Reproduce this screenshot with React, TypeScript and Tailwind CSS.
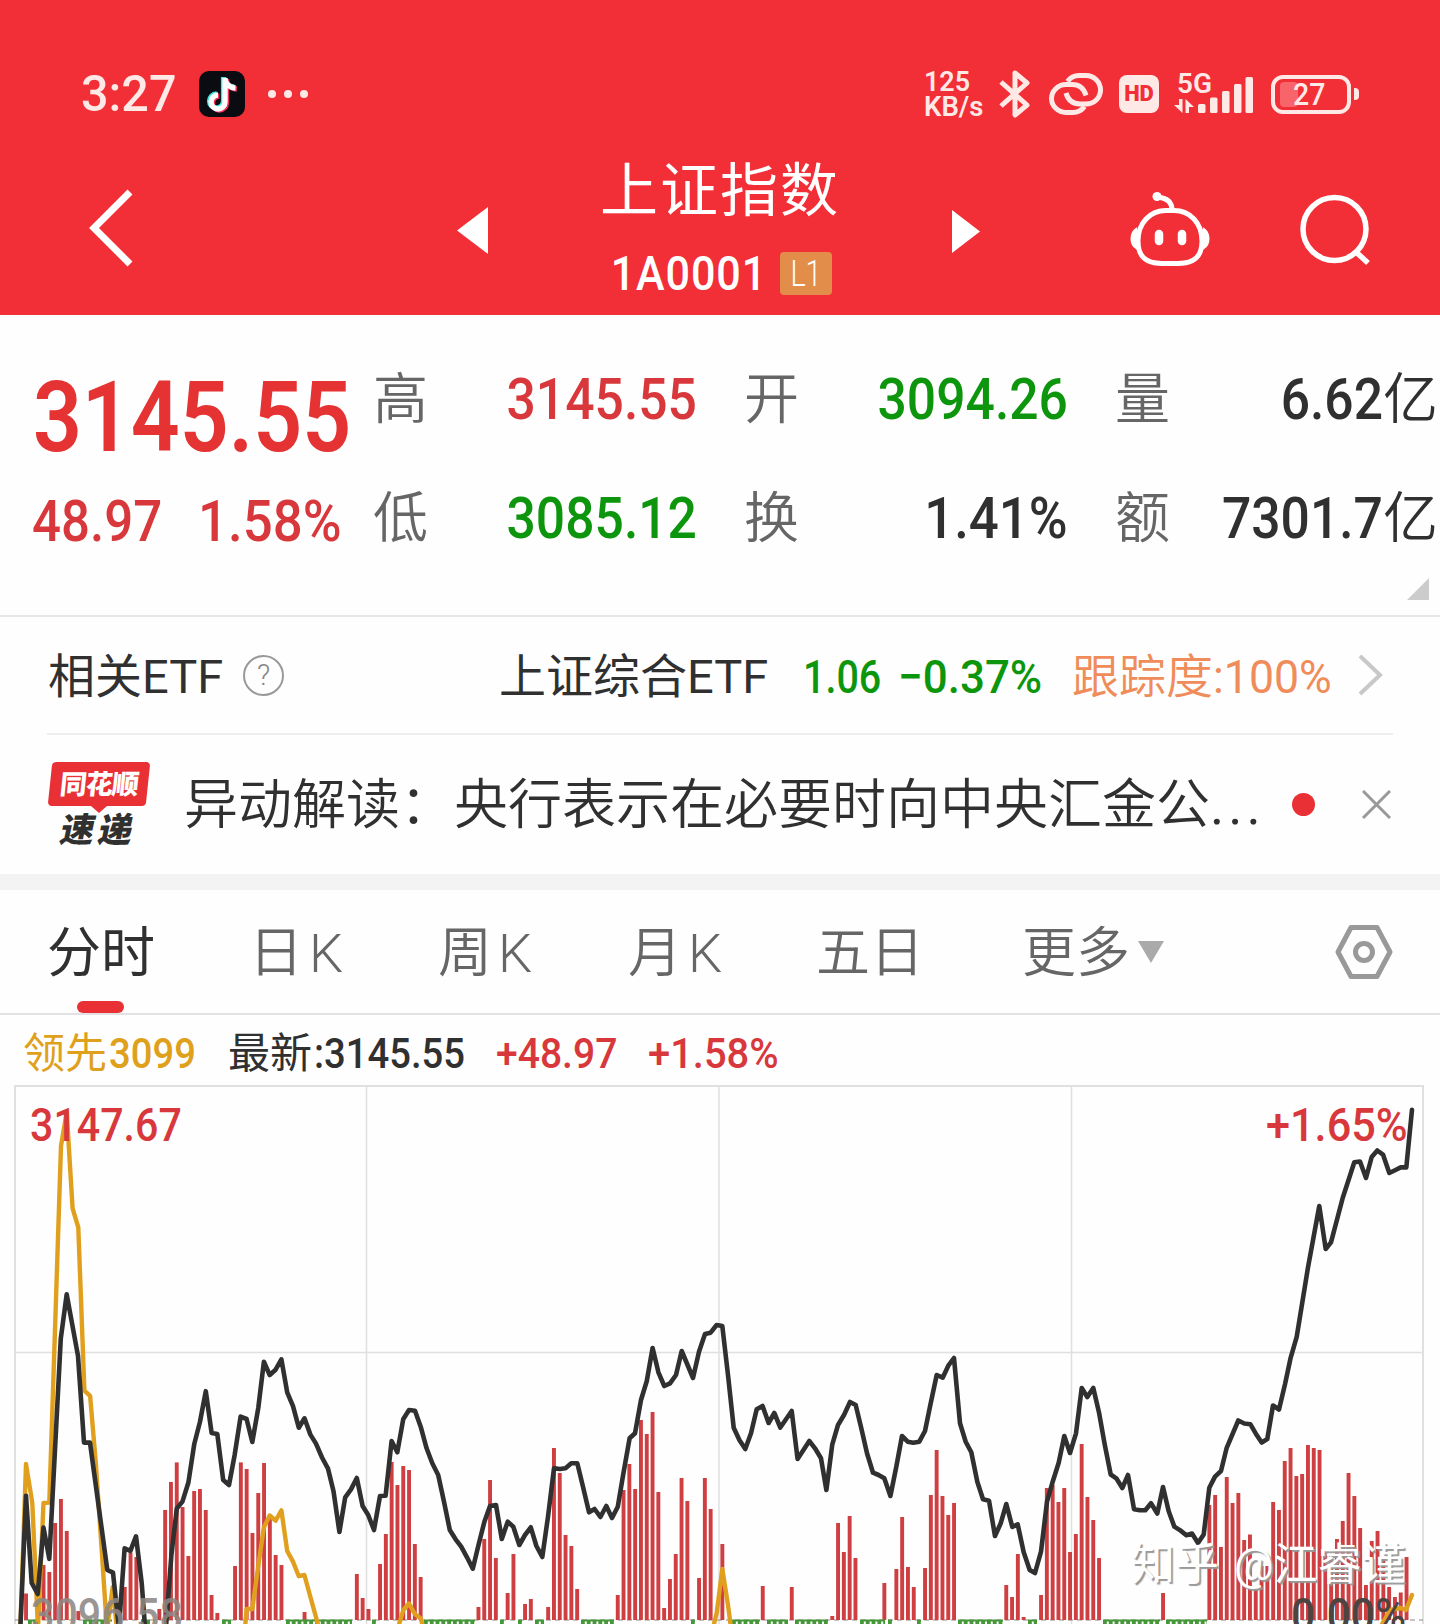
import clsx from "clsx";

type FigProps = {
  children: React.ReactNode;
  className?: string;
  align?: "left" | "right";
};

function Fig({ children, className, align = "left" }: FigProps) {
  return (
    <span
      className={clsx(
        "inline-block whitespace-pre font-medium",
        align === "left" ? "origin-left" : "origin-right",
        className,
      )}
    >
      {children}
    </span>
  );
}

function StatusBar() {
  return (
    <div className="flex h-[46px] items-center text-[#ffe9e7]">
      <Fig className="w-[100px] scale-x-[.97] pl-px text-[50px]">3:27</Fig>
      <svg className="ml-[19px] size-[46px]" viewBox="0 0 46 46">
        <rect width="46" height="46" rx="10" fill="#0b0b12" />
        <g fill="none" strokeWidth="5.4">
          <path d="M24.6 6v24a7 7 0 1 1-7-7M24.6 7c.6 5 4.4 8.600 10.500 9" stroke="#3fe6e0" />
          <path d="M27.400 8v24a7 7 0 1 1-7-7M27.400 9c.6 5 4.400 8.600 10.500 9" stroke="#f5315c" />
          <path d="M26 7v24a7 7 0 1 1-7-7M26 8c.6 5 4.400 8.600 10.500 9" stroke="#fff" />
        </g>
      </svg>
      <div className="ml-[23px] flex gap-2">
        <i className="size-2 rounded-full bg-[#ffe9e7]" />
        <i className="size-2 rounded-full bg-[#ffe9e7]" />
        <i className="size-2 rounded-full bg-[#ffe9e7]" />
      </div>

      <div className="ml-[616px] flex w-[64px] flex-col text-[28px] leading-[25px]">
        <Fig className="h-[25px] scale-x-[.96] font-semibold!">125</Fig>
        <Fig className="h-[25px] scale-x-[.98] font-semibold!">KB/s</Fig>
      </div>
      <svg className="ml-[11px] h-[50px] w-8" viewBox="0 0 32 50" fill="none" stroke="currentColor" strokeWidth="5" strokeLinejoin="round">
        <path d="M2 13l26 23-12 10V4l12 10L2 37" />
      </svg>
      <svg className="ml-[18px] h-[42px] w-[54px]" viewBox="0 0 54 42" fill="none" stroke="currentColor" strokeWidth="5">
        <path d="M18.500 8.500C21 5 25 2.500 30 2.500h7c8 0 14.500 6.500 14.500 14.500S45 31 37 31h-6c-7 0-12-4-14-11" />
        <path d="M35.500 33.500C33 37 29 39.500 24 39.500h-7C9 39.500 2.500 33 2.500 25.500S9 11.500 17 11.500h6c7 0 12 4 14 11" />
      </svg>
      <div className="ml-[16px] flex h-[38px] w-10 items-center justify-center rounded-lg bg-[#ffe9e7]">
        <span className="text-[22px] font-black text-[#f22e36]">HD</span>
      </div>
      <svg className="ml-[14px] h-[42px] w-[81px] overflow-visible" viewBox="0 0 81 42" fill="currentColor">
        <text x="4" y="19.500" fontSize="28" fontWeight="600" textLength="35" lengthAdjust="spacingAndGlyphs">5G</text>
        <path d="M6 26h3.500v14L1 32h5zM12.500 40V26l8.500 8h-5v6z" />
        <rect x="25" y="31" width="7.500" height="9" rx="1.500" />
        <rect x="37" y="24.500" width="7.500" height="15.500" rx="1.500" />
        <rect x="49" y="18" width="7.500" height="22" rx="1.500" />
        <rect x="61" y="11" width="7.500" height="29" rx="1.500" />
        <rect x="72.500" y="4" width="7.500" height="36" rx="1.500" />
      </svg>
      <div className="relative ml-[17px] flex h-[39px] w-20 items-center justify-center rounded-xl border-4 border-[#ffe9e7]">
        <div className="absolute left-[5px] top-[3px] h-[25px] w-[18px] rounded-sm bg-[#f7646a]" />
        <Fig className="relative scale-x-[.92] text-[31px]">27</Fig>
      </div>
      <i className="ml-[3px] h-3 w-[5px] rounded-r bg-[#ffe9e7]" />
    </div>
  );
}

function TitleBar() {
  return (
    <div className="flex h-[150px] items-start text-white">
      <svg className="ml-[8px] mt-[30px] h-[80px] w-[46px]" viewBox="0 0 46 80" fill="none" stroke="currentColor" strokeWidth="7">
        <path d="M42 4L6 40l36 36" />
      </svg>
      <svg className="ml-[323px] mt-[49px] h-[47px] w-[31px]" viewBox="0 0 31 47" fill="currentColor">
        <path d="M31 0v47L0 23.500z" />
      </svg>
      <div className="ml-[98px] flex w-[266px] flex-col items-center">
        <h1 className="pl-[2px] text-[58px] leading-[66px] tracking-[2px]">上证指数</h1>
        <div className="mt-[27px] flex h-[44px] w-full items-center">
          <Fig className="w-[167px] scale-x-[.88] pl-[28px] text-[49px] tracking-[1px]">1A0001</Fig>
          <span className="ml-[27px] flex h-[43px] w-[52px] items-center justify-center rounded bg-[#e28d49] text-[37px]">
            <Fig className="origin-center! scale-x-[.78] font-[350]!">L1</Fig>
          </span>
        </div>
      </div>
      <svg className="ml-[100px] mt-[52px] h-[43px] w-[28px]" viewBox="0 0 28 43" fill="currentColor">
        <path d="M0 0v43l28-21.500z" />
      </svg>
      <svg className="ml-[148px] mt-[33px] h-[76px] w-[84px]" viewBox="0 0 84 76" fill="none" stroke="currentColor" strokeWidth="5">
        <path d="M42 19.500h4C62 19.500 74 32 74 50c0 15-7 22.500-24 22.500H34C17 72.500 10 65 10 50c0-18 12-30.500 28-30.500z" />
        <path d="M44 19C44 11 39 7 30 6" />
        <circle cx="29" cy="5.500" r="4.500" fill="currentColor" stroke="none" />
        <path d="M8 38c-6 4-6 15 0 19zM76 38c6 4 6 15 0 19z" fill="currentColor" strokeWidth="2" />
        <path d="M31 43v7M54 43v7" strokeWidth="8.500" strokeLinecap="round" />
      </svg>
      <svg className="ml-[87px] mt-[36px] size-[72px]" viewBox="0 0 72 72" fill="none" stroke="currentColor" strokeWidth="5.500">
        <circle cx="35.500" cy="35" r="31.500" />
        <path d="M57 58l12 11" />
      </svg>
    </div>
  );
}

const stats = [
  { label: "高", value: "3145.55", color: "text-[#d8383b]" },
  { label: "开", value: "3094.26", color: "text-[#0d960d]" },
  { label: "量", value: "6.62", unit: "亿", color: "text-[#303030]" },
  { label: "低", value: "3085.12", color: "text-[#0d960d]" },
  { label: "换", value: "1.41%", color: "text-[#303030]" },
  { label: "额", value: "7301.7", unit: "亿", color: "text-[#303030]" },
];

function Quote() {
  return (
    <section className="relative flex h-[302px] border-b-2 border-[#e6e6e6] pt-6">
      <div className="w-[373px] pl-8 text-[#d8383b]">
        <Fig className="mt-[29px] block! scale-x-[.875] pl-px text-[98px] leading-[100px] font-semibold! text-[#e53232]">3145.55</Fig>
        <div className="mt-[23px] flex h-[60px] items-center text-[58px]">
          <Fig className="w-[166px] scale-x-[.88]">48.97</Fig>
          <Fig className="scale-x-[.91]">1.58%</Fig>
        </div>
      </div>
      <div className="grid h-[238px] grid-cols-[324px_324px_323px] grid-rows-2 gap-x-[47px]">
        {stats.map((s) => (
          <div key={s.label} className="flex items-center justify-between">
            <span className="pt-[2px] text-[55px] font-[350] text-[#666]">{s.label}</span>
            <span className={clsx("flex items-center text-[58px]", s.color)}>
              <Fig align="right" className={s.value.endsWith("%") ? "scale-x-[.91]" : "scale-x-[.89]"}>
                {s.value}
              </Fig>
              {s.unit && <span className="pt-[2px] text-[55px] font-[350]">{s.unit}</span>}
            </span>
          </div>
        ))}
      </div>
      <svg className="absolute bottom-[15px] right-[11px] size-[22px]" viewBox="0 0 22 22">
        <path d="M22 0v22H0z" fill="#ccc" />
      </svg>
    </section>
  );
}

function EtfRow() {
  return (
    <section className="mx-[47px] flex h-[118px] items-center border-b-2 border-[#eee] text-[47px] text-[#303030]">
      <span className="w-[196px] pt-[2px] pl-px">相关ETF</span>
      <span className="flex size-[41px] items-center justify-center rounded-full border-2 border-[#999] text-[29px] font-light text-[#888]">?</span>
      <span className="ml-[215px] w-[304px] whitespace-nowrap pt-[2px]">上证综合ETF</span>
      <Fig className="w-[95px] scale-x-[.84] pt-[3px]">
        <span className="text-[#0d960d]">1.06</span>
      </Fig>
      <Fig className="w-[174px] scale-x-[.935] pt-[3px] text-[#0d960d]">−0.37%</Fig>
      <span className="flex w-[286px] items-center whitespace-nowrap pt-[2px] text-[#ef8c59]">
        <span className="font-[350]">跟踪度</span>
        <Fig className="scale-x-[.95] font-normal!">:100%</Fig>
      </span>
      <svg className="h-[42px] w-[26px]" viewBox="0 0 26 42" fill="none" stroke="#c8c8c8" strokeWidth="4">
        <path d="M2 2l20 19L2 40" />
      </svg>
    </section>
  );
}

function NewsRow() {
  return (
    <section className="flex h-[139px] items-center pl-[47px] text-[#303030]">
      <div className="flex w-[104px] flex-col items-center">
        <div className="flex h-[44px] w-[98px] -skew-x-6 items-center justify-center rounded-[4px] bg-[#e83035] pt-[2px] text-[27px] font-black tracking-[-1px] text-white">
          同花顺
        </div>
        <svg className="h-[7px] w-4" viewBox="0 0 16 7">
          <path d="M0 0h16L8 7z" fill="#e83035" />
        </svg>
        <div className="-skew-x-12 text-[34px] font-black leading-[34px] tracking-[4px]">速递</div>
      </div>
      <p className="ml-[33px] w-[1080px] whitespace-nowrap pt-[2px] text-[54px] font-[350]">
        异动解读：央行表示在必要时向中央汇金公<span className="font-normal tracking-[4px]">...</span>
      </p>
      <i className="ml-[28px] size-[23px] rounded-full bg-[#e83035]" />
      <svg className="ml-[47px] size-[29px]" viewBox="0 0 29 29" stroke="#999" strokeWidth="3">
        <path d="M1 1l27 27M28 1L1 28" />
      </svg>
    </section>
  );
}

function Tabs() {
  return (
    <nav className="flex h-[125px] items-center border-b-2 border-[#e2e2e2] pl-[47px] pt-px text-[54px] font-[350] text-[#666]">
      <div className="relative flex h-full w-[202px] items-center pt-[3px] font-normal text-[#303030]">
        分时
        <i className="absolute bottom-0 left-[30px] h-[12px] w-[47px] rounded-full bg-[#e83035]" />
      </div>
      <span className="w-[189px] pt-[3px]">日<span className="ml-[6px]">K</span></span>
      <span className="w-[190px] pt-[3px]">周<span className="ml-[6px]">K</span></span>
      <span className="w-[188px] pt-[3px]">月<span className="ml-[6px]">K</span></span>
      <span className="w-[206px] pt-[3px]">五日</span>
      <span className="pt-[3px]">更多</span>
      <svg className="ml-[8px] h-[22px] w-[26px]" viewBox="0 0 26 22">
        <path d="M0 0h26L13 22z" fill="#aaa" />
      </svg>
      <svg className="ml-[171px] h-[56px] w-[58px]" viewBox="0 0 58 56" fill="none" stroke="#999" strokeWidth="5" strokeLinejoin="round">
        <path d="M16 3.500h26L55 28 42 52.500H16L3 28z" />
        <circle cx="29" cy="28" r="8.500" />
      </svg>
    </nav>
  );
}

function Legend() {
  return (
    <div className="flex h-[70px] items-center pl-[23px] pt-[7px] text-[42px]">
      <span className="flex w-[205px] items-center text-[#dfa01c]">
        <span className="w-[86px]">领先</span>
        <Fig className="scale-x-[.91]">3099</Fig>
      </span>
      <span className="flex w-[268px] items-center text-[#303030]">
        <span className="w-[86px]">最新</span>
        <Fig className="scale-x-[.91]">:3145.55</Fig>
      </span>
      <Fig className="w-[152px] scale-x-[.93] text-[#d8383b]">+48.97</Fig>
      <Fig className="scale-x-[.95] text-[#d8383b]">+1.58%</Fig>
    </div>
  );
}

const BASE = 1620;
const STEP = 5.8;

// price line
const price =
  "19,1650 20.700,1620 26,1495.700 31.700,1583 37.700,1594 43.500,1527.600 49.300,1558.800 60.800,1338.500 66.700,1294.400 78,1355.800 84,1442.600 90,1442.600 107.300,1570 113,1572.700 118.900,1628 124.600,1548.400 130.400,1550.900 136,1536.300 141.700,1583 146,1640 165,1640 171.400,1555 176.800,1508.500 182.400,1501.600 188.400,1482.500 194.200,1444.300 200,1421.800 205.800,1391.200 211.600,1432.900 217.300,1434 223.200,1480 229,1485 234.700,1454.700 240.600,1416.600 246.600,1419 252.300,1442 258.300,1407.900 263.900,1361.800 269.700,1375 275.600,1369.700 281.400,1359.300 287.200,1392.300 293,1406.200 298.800,1427.700 304.500,1418.300 310.400,1434.600 316,1443.600 322,1457.500 328,1468.600 333.500,1491.200 339.400,1532 345.200,1497.400 351,1489.400 356.800,1478 362.600,1506 368.200,1515 374,1530 380,1496 385.600,1495.700 391.600,1441 397.300,1452.300 403.200,1419.300 409,1410 415,1410.700 420.700,1426.700 426.600,1448.300 432.300,1463.300 438.200,1475 444,1501.700 449.800,1530 455.600,1539.300 461.200,1546.700 467,1557.300 472.800,1568.700 478.500,1545 484.400,1521.700 490,1506 496,1505 501.800,1539 507.700,1521.700 513.300,1526.700 519.300,1545 525,1535 530.800,1527.300 536.400,1546 542.300,1557 548,1516.700 554,1468.300 560,1469 565.500,1468.300 571.300,1463.300 577.300,1463.300 583,1486.700 589,1512.300 594.600,1509 600.400,1517 606.300,1506 612,1518 617.800,1506.700 623.400,1473.300 629.600,1438.300 635,1433.300 641,1400 646.800,1381 652.600,1348 658.400,1372.300 664.300,1386 670,1383.300 676,1375 681.700,1351 693,1378 699,1351.700 705,1334 710.600,1332.700 716.600,1325 722.300,1326 728,1375 733.700,1427.700 739.400,1440 745.300,1449 751,1433.300 756.700,1409.300 762.600,1406 768.600,1423 774.300,1413 780.300,1427.500 791.700,1411 797.600,1459 809.300,1441 815,1448.300 821,1458.300 826.400,1490 832.300,1444.300 838,1425 844,1415 850,1402 855.700,1405 861.300,1428.300 867,1453.300 873,1472.700 878.600,1475 884.300,1478.300 890.400,1496 896.300,1466.700 902,1436 907.700,1441.700 913.300,1442.700 919.300,1441.700 925,1431 930.700,1403.300 936.700,1375 942.700,1377.700 948.300,1365.700 954,1358 960,1423.300 965.700,1441.700 971.300,1452.300 977.300,1481.700 983,1499.300 989,1500.700 995,1536 1000.700,1523.300 1006.300,1504 1012.300,1527 1017.700,1524.300 1023.700,1552.300 1029.700,1570 1035,1573 1041,1551.700 1047,1501.700 1052.700,1481.700 1058.700,1462.700 1064.300,1436 1070,1453 1076,1433.300 1081.700,1388 1087.300,1397 1093.300,1388 1099,1412.400 1104.700,1444.300 1110.700,1474.500 1116.300,1478.300 1122.300,1488 1128,1475 1134,1509.200 1140,1510.300 1145.300,1510.300 1151,1503.300 1157.300,1513.500 1163,1487 1168.700,1511.300 1174.300,1526.600 1180.300,1530.400 1186.300,1535.200 1192,1533.500 1198,1543 1203.700,1534.500 1209.300,1487.700 1215,1476.600 1221,1471 1226.700,1447.800 1238.300,1420.500 1244.300,1423.500 1250.300,1424.200 1256,1433.900 1261.700,1442.500 1267.300,1439 1273,1405.500 1279,1409.500 1285,1384.300 1290.700,1357.600 1296.700,1336.800 1308,1267.400 1319.300,1206 1325.700,1249 1331,1242.400 1342.700,1198 1354.300,1162.200 1360,1161.500 1366,1178 1371.700,1157 1377.300,1150.500 1383,1154.600 1389.300,1173 1395,1170.200 1400.700,1167.400 1406.300,1167.400 1412,1109.800";

// leading indicator, only the parts above the baseline
const lead = [
  "20,1640 26,1464 32.300,1503 38,1628 43.500,1503 49.300,1502.600 55,1329.800 61,1146 66.700,1112 72.600,1208.400 78.300,1227.500 84.400,1390.600 90.100,1395.800 95.700,1461.700 101.600,1548.400 107,1630 112.700,1587 118,1640",
  "245,1628 246.700,1609 252.300,1609 258.300,1565.800 263.800,1527.600 269.700,1515.500 275.600,1520.700 281.400,1510.300 287.200,1551 293,1561.600 298.800,1576.200 304.400,1575 310.400,1597 319,1628",
  "398,1628 403.300,1610 409,1603.500 415,1614.300 420.700,1618.300 424,1630",
  "713,1628 716.700,1613 722.300,1569 728,1605 731,1628",
  "1380,1628 1390,1610 1400.700,1608 1406,1610 1412,1595",
];

// runs of adjacent volume bars: first bar's x, then the top of each
const volume: [number, number[]][] = [
  [26, [1593.5]],
  [43.5, [1565, 1572, 1523, 1499, 1531]],
  [78.3, [1611]],
  [124.7, [1587, 1552.6, 1557]],
  [159.3, [1609, 1510, 1482, 1462.4, 1507, 1556, 1491, 1489, 1510, 1595, 1613]],
  [235, [1566, 1462.4, 1469, 1533, 1493, 1463, 1517, 1555, 1565]],
  [304.5, [1612]],
  [356.8, [1574, 1598, 1609]],
  [380, [1564, 1534, 1462, 1485, 1466, 1470, 1544, 1577]],
  [478.4, [1607, 1539, 1480, 1558]],
  [507.6, [1593, 1554]],
  [525, [1604, 1599]],
  [548.1, [1607, 1448, 1473, 1535, 1546, 1589]],
  [617.7, [1595, 1490, 1464, 1489, 1420, 1434, 1412, 1492, 1608, 1579, 1554, 1478, 1501]],
  [699, [1578, 1478, 1509]],
  [722.3, [1544]],
  [762.7, [1586]],
  [791.7, [1587]],
  [832.2, [1616, 1523, 1552, 1516, 1558]],
  [884.3, [1583]],
  [896.3, [1569, 1517, 1567, 1587]],
  [925, [1568, 1495, 1450, 1496, 1515, 1503]],
  [1006.2, [1585, 1597, 1554, 1617]],
  [1041, [1595, 1488, 1485, 1502, 1488, 1552, 1534, 1444, 1497, 1520, 1558]],
  [1163, [1593]],
  [1209.3, [1505, 1495, 1547, 1477, 1503, 1493, 1540, 1534.5, 1588, 1566, 1566, 1502, 1510, 1461, 1448, 1476, 1474, 1445, 1448, 1450, 1551, 1560, 1539, 1521, 1473, 1496, 1528, 1585, 1541, 1531, 1559, 1587, 1597, 1592.5, 1557]],
];

const sells: [number, number][] = [
  [28, 37], [83, 112], [141, 150], [222, 231], [286, 352], [372, 376], [424, 475], [500, 504],
  [518, 522], [535, 544], [581, 614], [691, 695], [732, 760], [767, 788], [795, 828], [860, 885],
  [888, 892], [917, 921], [958, 1003], [1028, 1037], [1103, 1160], [1166, 1207],
];

function Chart() {
  return (
    <div className="relative h-[539px] overflow-hidden text-[46px] leading-[46px]">
      <svg className="block h-[539px] w-[1440px]" viewBox="0 1085 1440 539" fill="none">
        <g stroke="#e0e0e0" strokeWidth="1.500">
          <path d="M15 1624V1086h1408v538" strokeWidth="2" />
          <path d="M15 1352.500h1408M366.500 1086v538M719 1086v538M1071.500 1086v538" />
        </g>
        <path d="M15 1620h1408" stroke="#8a8a8a" strokeDasharray="5 4" />
        {volume.map(([x, tops]) =>
          tops.map((top, i) => (
            <rect key={`${x}-${i}`} x={x + i * STEP - 1.9} y={top} width="3.900" height={BASE - top} fill="#cf3f41" />
          )),
        )}
        {sells.map(([a, b]) => (
          <g key={a} stroke="#46963a">
            <path d={`M${a} 1620.500H${b}`} strokeWidth="2" />
            <path d={`M${a} 1622.500H${b}`} strokeWidth="4" strokeDasharray="3.800 2" />
          </g>
        ))}
        <g strokeLinejoin="round" strokeLinecap="round">
          {lead.map((points) => (
            <polyline key={points} points={points} stroke="#e0a01e" strokeWidth="4.400" />
          ))}
          <polyline points={price} stroke="#303030" strokeWidth="4.600" />
        </g>
      </svg>
      <Fig className="absolute left-[30px] top-[17px] scale-x-[.895] text-[#d8383b]">3147.67</Fig>
      <Fig align="right" className="absolute right-[32px] top-[17px] scale-x-[.94] text-[#d8383b]">+1.65%</Fig>
      <Fig className="absolute left-[31px] top-[507px] scale-x-[.895] text-[#8d8784]/90">3096.58</Fig>
      <Fig align="right" className="absolute right-[34px] top-[507px] scale-x-[.92] text-[#4d4340]">0.00%</Fig>
      <span className="absolute left-[1131px] top-[457px] whitespace-nowrap text-[44px] text-white [text-shadow:2px_2px_1px_#999] [word-spacing:4px]">
        知乎 @江睿谨
      </span>
    </div>
  );
}

export default function App() {
  return (
    <main className="h-[1624px] w-[1440px] overflow-hidden bg-[#fefefe] font-['Roboto','Noto_Sans_CJK_SC',sans-serif] leading-none">
      <header className="h-[315px] bg-[#f22e36] pl-[80px] pt-[71px]">
        <StatusBar />
        <div className="mt-[41px]">
          <TitleBar />
        </div>
      </header>
      <Quote />
      <EtfRow />
      <NewsRow />
      <div className="h-4 bg-[#f3f3f3]" />
      <Tabs />
      <Legend />
      <Chart />
    </main>
  );
}
